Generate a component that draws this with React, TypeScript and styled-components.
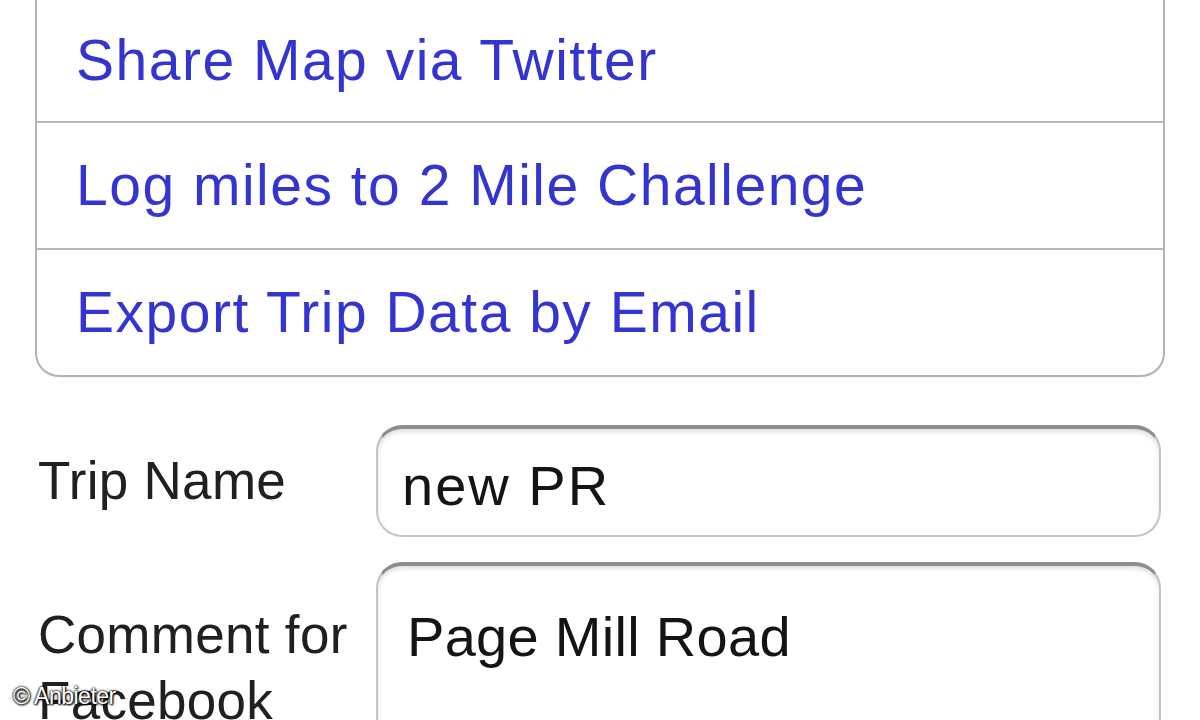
import React from "react";
import styled, { createGlobalStyle } from "styled-components";

const GlobalStyle = createGlobalStyle`
  html, body {
    margin: 0;
    padding: 0;
    background: #ffffff;
  }
  body {
    font-family: "Liberation Sans", Arial, Helvetica, sans-serif;
  }
`;

const actions = [
  { id: 1, label: "Share Map via Twitter" },
  { id: 2, label: "Log miles to 2 Mile Challenge" },
  { id: 3, label: "Export Trip Data by Email" },
];

const App = () => {
  return (
    <Screen>
      <GlobalStyle />
      <Group>
        {actions.map(({ id, label }, i) => (
          <ActionRow key={id} first={i === 0}>
            <ActionText>{label}</ActionText>
          </ActionRow>
        ))}
      </Group>

      <Form>
        <FieldRow>
          <Label top={23}>Trip Name</Label>
          <Field>
            <FieldText>new PR</FieldText>
          </Field>
        </FieldRow>
        <FieldRow>
          <Label top={40}>
            Comment for
            <br />
            Facebook
          </Label>
          <Field tall>
            <FieldText comment>Page Mill Road</FieldText>
          </Field>
        </FieldRow>
      </Form>

      <Credit>© Anbieter</Credit>
    </Screen>
  );
};

export default App;

const Screen = styled.div`
  position: relative;
  width: 1200px;
  height: 720px;
  overflow: hidden;
  background: #ffffff;
`;

const Group = styled.div`
  margin: 0 35px;
  border: 2px solid #b4b4b8;
  border-top: none;
  border-radius: 0 0 24px 24px;
  box-shadow: 0 1px 1px rgba(0, 0, 0, 0.06);
  background: #ffffff;
  display: flex;
  flex-direction: column;
`;

const ActionRow = styled.div<{ first?: boolean }>`
  height: ${({ first }) => (first ? "121px" : "127px")};
  box-sizing: border-box;
  display: flex;
  align-items: center;
  padding-left: 39px;
  border-top: ${({ first }) => (first ? "none" : "2px solid #b8b8bc")};
`;

const ActionText = styled.div`
  font-size: 57px;
  letter-spacing: 1.5px;
  color: #3434d2;
  white-space: nowrap;
  margin-top: -2px;
`;

const Form = styled.div`
  margin-top: 48px;
  padding: 0 38px;
  display: flex;
  flex-direction: column;
  gap: 25px;
`;

const FieldRow = styled.div`
  display: flex;
  align-items: flex-start;
`;

const Label = styled.div<{ top: number }>`
  width: 338px;
  flex-shrink: 0;
  font-size: 53px;
  line-height: 66px;
  letter-spacing: 0.3px;
  color: #202020;
  padding-top: ${({ top }) => top}px;
`;

const Field = styled.div<{ tall?: boolean }>`
  width: 785px;
  height: ${({ tall }) => (tall ? "220px" : "112px")};
  box-sizing: border-box;
  border: 2px solid #c4c4c4;
  border-top: 4px solid #8e8e8e;
  border-radius: 26px;
  box-shadow: inset 0 3px 4px rgba(0, 0, 0, 0.12);
  background: #ffffff;
  display: flex;
  align-items: flex-start;
`;

const FieldText = styled.div<{ comment?: boolean }>`
  font-size: 56px;
  line-height: 62px;
  letter-spacing: ${({ comment }) => (comment ? "0.3px" : "2px")};
  color: #141414;
  padding-left: ${({ comment }) => (comment ? "29px" : "24px")};
  padding-top: ${({ comment }) => (comment ? "40px" : "26px")};
  white-space: nowrap;
`;

const Credit = styled.div`
  position: absolute;
  left: 13px;
  bottom: 10px;
  font-size: 23px;
  color: #ffffff;
  letter-spacing: -0.5px;
  text-shadow: 0 0 2px #000, 0 0 3px #000, 1px 1px 2px #000;
`;
